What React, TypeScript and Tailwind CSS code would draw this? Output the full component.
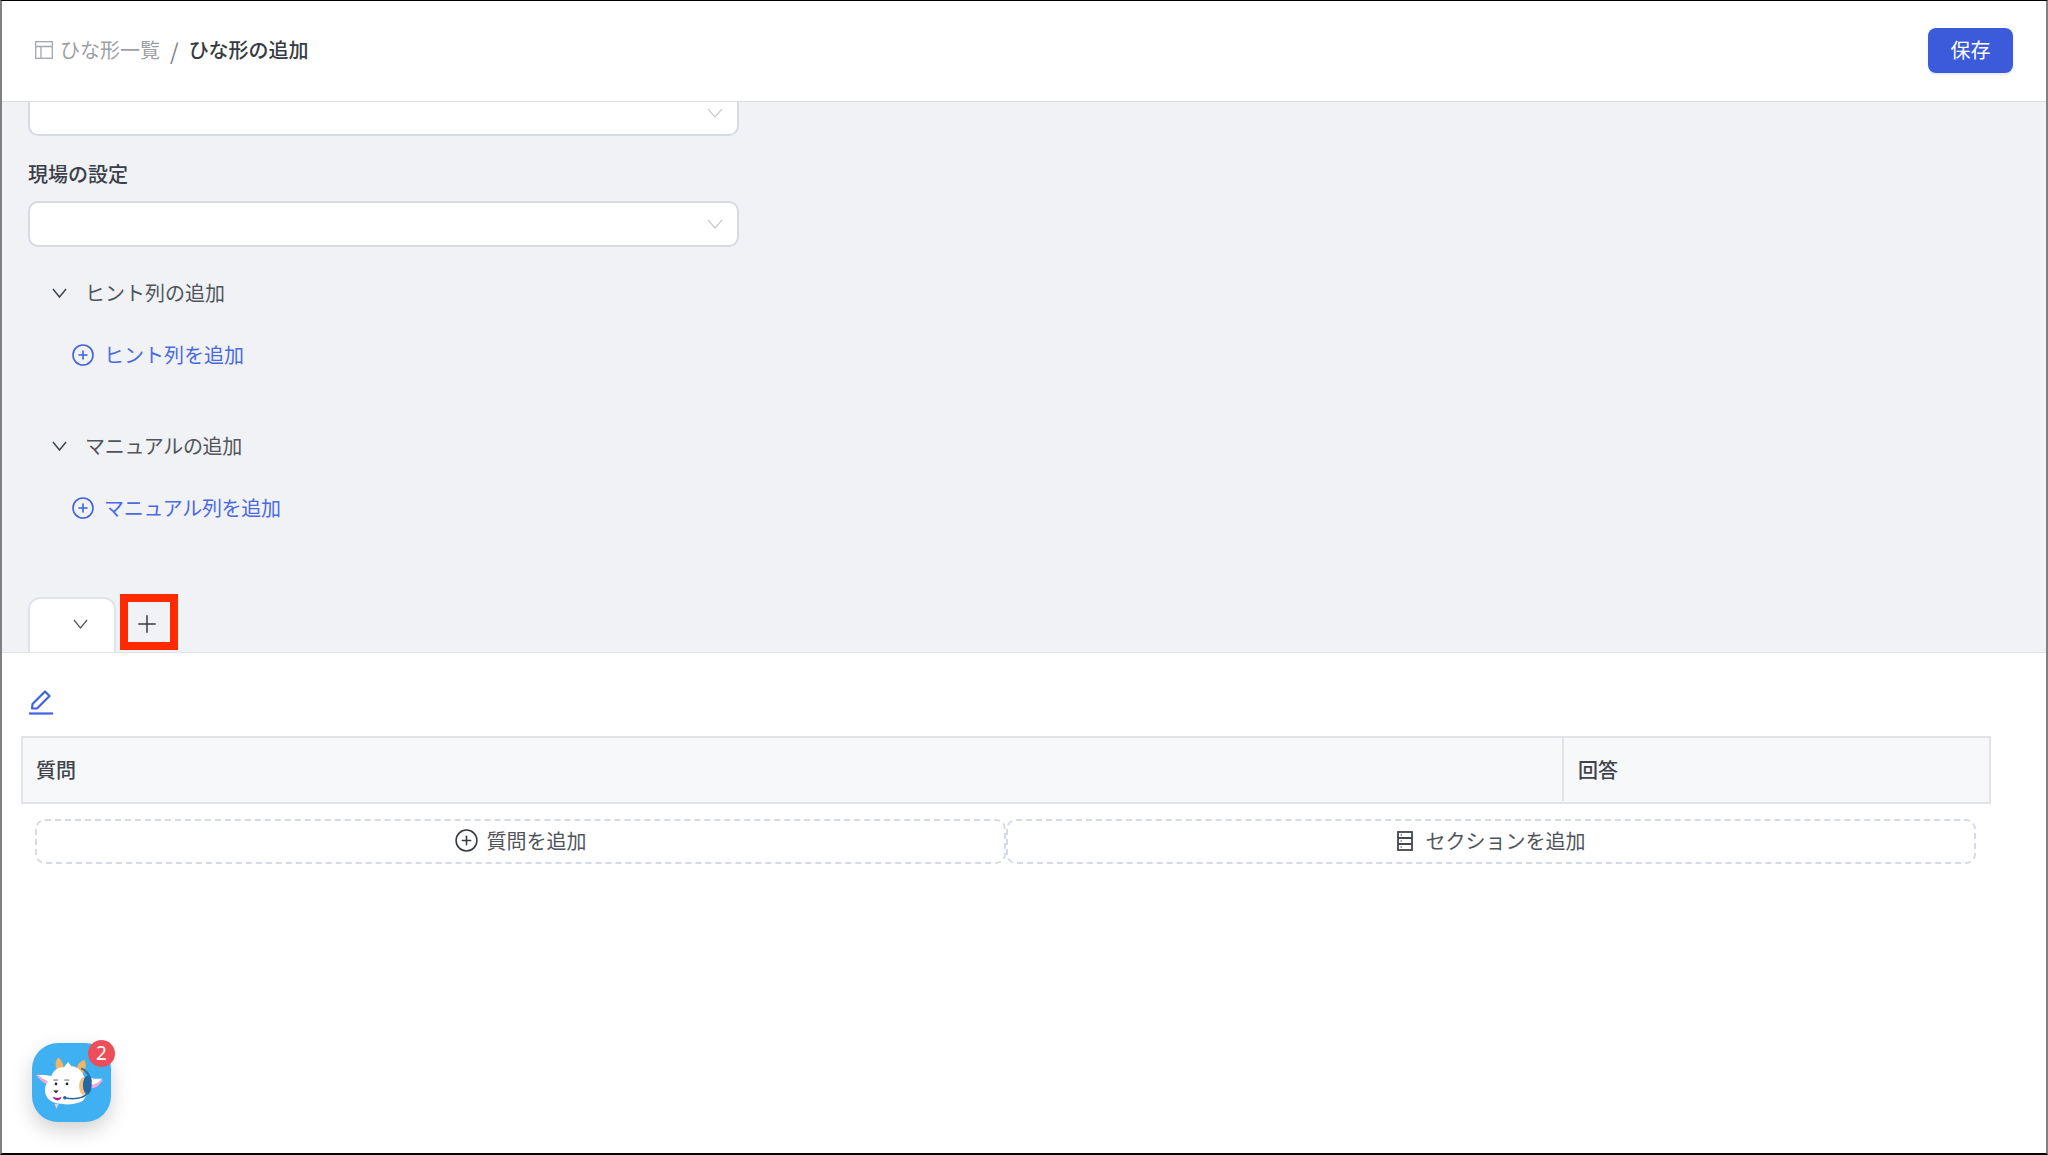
import React from "react";
import { Plus, CirclePlus } from "lucide-react";

const font = { fontFamily: '"Noto Sans CJK JP", "Liberation Sans", sans-serif' };

function Chev({ className, sw }: { className: string; sw: number }) {
  return (
    <svg viewBox="0 0 16 10" className={className} fill="none" stroke="currentColor" strokeWidth={sw} preserveAspectRatio="none">
      <path d="M1 1 L8 9 L15 1" />
    </svg>
  );
}

function Select({ clipped }: { clipped?: boolean }) {
  return (
    <div
      className={
        clipped
          ? "w-[711px] h-[34px] bg-white border-x-2 border-b-2 border-[#d5dae6] rounded-b-[10px] flex justify-end items-start pr-[14px] pt-[6px]"
          : "w-[711px] h-[46px] bg-white border-2 border-[#d5dae6] rounded-[10px] flex justify-end items-center pr-[14px]"
      }
    >
      <Chev className="w-[16px] h-[10px] text-[#b9bdc4]" sw={1.1} />
    </div>
  );
}

function Section({ title, link, mb, tight }: { title: string; link: string; mb: string; tight?: boolean }) {
  return (
    <div className={tight ? `${mb} tracking-[-0.3px]` : mb}>
      <div className="flex items-center h-[30px] pl-[50px]">
        <Chev className="w-[15px] h-[10px] text-[#3f444b]" sw={1.6} />
        <span className="ml-[18px] text-[20px] leading-[30px] text-[#50555c]">{title}</span>
      </div>
      <div className="flex items-center h-[30px] mt-[32px] pl-[69px] text-[#3f62e0]">
        <CirclePlus className="w-[24px] h-[24px]" strokeWidth={1.6} />
        <span className="ml-[9px] text-[20px] leading-[30px] text-[#4a6ae3]">{link}</span>
      </div>
    </div>
  );
}

function Goat() {
  return (
    <svg viewBox="0 0 79 79" className="w-[79px] h-[79px]">
      <g transform="translate(-3.5 -4.2) scale(1.1)">
        <path d="M7 33 C13 32 20 34 25 37 L22 43 C16 42 11 39 7 33Z" fill="#f6a8cf" />
        <path d="M9 33 C15 32.5 21 33 25 36 L23 40 C17 39 13 37 9 33Z" fill="#fff" />
        <path d="M68 37 C64 43 60 46 54 45 L52 38 C57 39 63 39 68 37Z" fill="#f6a8cf" />
        <path d="M67 36 C63 41 59 42 53 42 L52 35 C57 36 63 37 67 36Z" fill="#fff" />
        <path d="M25 27 C24 23 25 19 27 17 C30 19 32 23 32 27Z" fill="#f2b565" />
        <path d="M44 30 C43 25 46 21 51 19 C53 24 52 30 48 33Z" fill="#f2b565" />
        <path d="M20 36 C22 29 27 25 32 26 L36 21 L39 25 C45 25 51 31 52 40 C54 48 53 56 46 58 C40 60 34 60 30 59 C21 59 15 54 15 47 C15 42 17 39 20 36Z" fill="#fff" />
        <ellipse cx="50" cy="43" rx="4" ry="8" fill="#f2c27e" />
        <path d="M48 27 C52 28 56 33 57 39" fill="none" stroke="#2d6ea8" strokeWidth="1.8" />
        <ellipse cx="53.5" cy="42" rx="4" ry="8.5" fill="#2368a2" />
        <path d="M53 50 C50 54 42 55 34 54" fill="none" stroke="#2368a2" strokeWidth="1.3" />
        <circle cx="33" cy="53.5" r="1.6" fill="#2368a2" />
        <circle cx="25" cy="41" r="1.2" fill="#222" />
        <circle cx="35" cy="41" r="1.2" fill="#222" />
        <path d="M22.5 37.5 h4.5 M32.5 37.5 h4.5" stroke="#555" strokeWidth="0.8" />
        <path d="M22.5 47 h5 l-2.5 2.6z" fill="#222" />
        <path d="M22 53 C25 54 28 54 30 53 C29 57 24 57 22 53Z" fill="#b0178d" />
        <path d="M23.5 59 h4 l-2 4.5z" fill="#d8d8d8" />
      </g>
    </svg>
  );
}

export default function App() {
  return (
    <div style={font} className="relative w-[2048px] h-[1155px] overflow-hidden flex flex-col bg-white border-t border-t-black border-l-2 border-l-[#808080] border-r-2 border-r-[#808080] border-b-2 border-b-black">
      <header className="h-[101px] shrink-0 bg-white border-b border-[#d9dde6] flex items-center justify-between pl-[33px] pr-[33px] pb-[2px]">
        <div className="flex items-center text-[20px]">
          <svg viewBox="0 0 18 18" className="w-[18px] h-[18px] text-[#a3a6ab]" fill="none" stroke="currentColor" strokeWidth="1.3">
            <rect x="0.7" y="0.7" width="16.6" height="16.6" />
            <path d="M0.7 5.5 H17.3 M6 5.5 V17.3" />
          </svg>
          <span className="ml-[7px] text-[#9c9fa4]">ひな形一覧</span>
          <span className="ml-[10px] text-[22px] leading-[30px] text-[#7b7e83]">/</span>
          <span className="ml-[10px] font-medium text-[#363b42]">ひな形の追加</span>
        </div>
        <button className="w-[85px] h-[45px] rounded-[8px] bg-[#3b5bdb] text-white text-[20px] shadow-[0_2px_2px_#e6ecfb]">保存</button>
      </header>

      <main className="h-[551px] shrink-0 bg-[#f0f2f6] border-b border-[#dfe3ea] flex flex-col">
        <div className="pl-[26px]">
          <Select clipped />
          <div className="mt-[23px] mb-[12px] h-[30px] text-[20px] leading-[30px] font-medium text-[#3b4047]">現場の設定</div>
          <Select />
        </div>
        <div className="mt-[31px]">
          <Section title="ヒント列の追加" link="ヒント列を追加" mb="mb-[61px]" />
          <Section title="マニュアルの追加" link="マニュアル列を追加" mb="" tight />
        </div>
        <div className="mt-auto flex items-end pl-[26px]">
          <div className="w-[88px] h-[55px] bg-white border-2 border-b-0 border-[#dfe3ee] rounded-t-[12px] flex justify-end pr-[26px] pt-[20px]">
            <Chev className="w-[15px] h-[10px] text-[#55595f]" sw={1.3} />
          </div>
          <div className="ml-[4px] mb-[2px] w-[58px] h-[56px] border-[8px] border-[#ff2a00] flex items-center justify-center pr-[4px] pt-[4px]">
            <Plus className="w-[28px] h-[28px] shrink-0 text-[#363b42]" strokeWidth={1.3} />
          </div>
        </div>
      </main>

      <section className="flex-1 bg-white pl-[19px]">
        <div className="pl-[7px] pt-[36px] h-[83px]">
          <svg viewBox="0 0 26 26" className="w-[26px] h-[26px] text-[#3f62e0]" fill="none" stroke="currentColor" strokeWidth="2.2">
            <path d="M4 19.5 L4.5 15 L17 2.5 L21.5 7 L9 19.5 Z" strokeLinejoin="round" />
            <path d="M1 24.5 H25" />
          </svg>
        </div>
        <div className="w-[1970px] h-[68px] flex bg-[#f7f8fa] border-2 border-[#e2e3e6] text-[20px] font-medium text-[#3f444b] pb-[1px]">
          <div className="w-[1541px] border-r-2 border-[#e2e3e6] pl-[13px] flex items-center">質問</div>
          <div className="flex-1 pl-[14px] flex items-center">回答</div>
        </div>
        <div className="mt-[15px] ml-[14px] flex text-[20px] text-[#50555c]">
          <div className="w-[971px] h-[45px] pb-[2px] border-2 border-dashed border-[#d5dae6] rounded-[10px] flex items-center justify-center">
            <CirclePlus className="w-[25px] h-[25px] text-[#363b42] -ml-[1px]" strokeWidth={1.5} />
            <span className="ml-[8px]">質問を追加</span>
          </div>
          <div className="w-[970px] h-[45px] pb-[2px] border-2 border-dashed border-[#d5dae6] rounded-[10px] flex items-center justify-center">
            <svg viewBox="0 0 16 20" className="w-[16px] h-[20px] text-[#43474e]" fill="none" stroke="currentColor" strokeWidth="1.8">
              <rect x="1" y="1" width="14" height="18" />
              <path d="M1 7 H15 M1 13 H15" />
              <path d="M3.5 4 h1.5 M3.5 10 h1.5 M3.5 16 h1.5" strokeWidth="1" />
            </svg>
            <span className="ml-[13px]">セクションを追加</span>
          </div>
        </div>
      </section>

      <div className="absolute left-[30px] top-[1042px] w-[79px] h-[79px] rounded-[26px] bg-[#3fb0f2] shadow-[0_8px_20px_rgba(0,0,0,0.18)]">
        <Goat />
        <div className="absolute left-[56px] top-[-3px] w-[27px] h-[27px] rounded-full bg-[#ee4d5a] text-white text-[19px] flex items-center justify-center" style={{ fontFamily: '"Noto Sans", sans-serif' }}>2</div>
      </div>
    </div>
  );
}
